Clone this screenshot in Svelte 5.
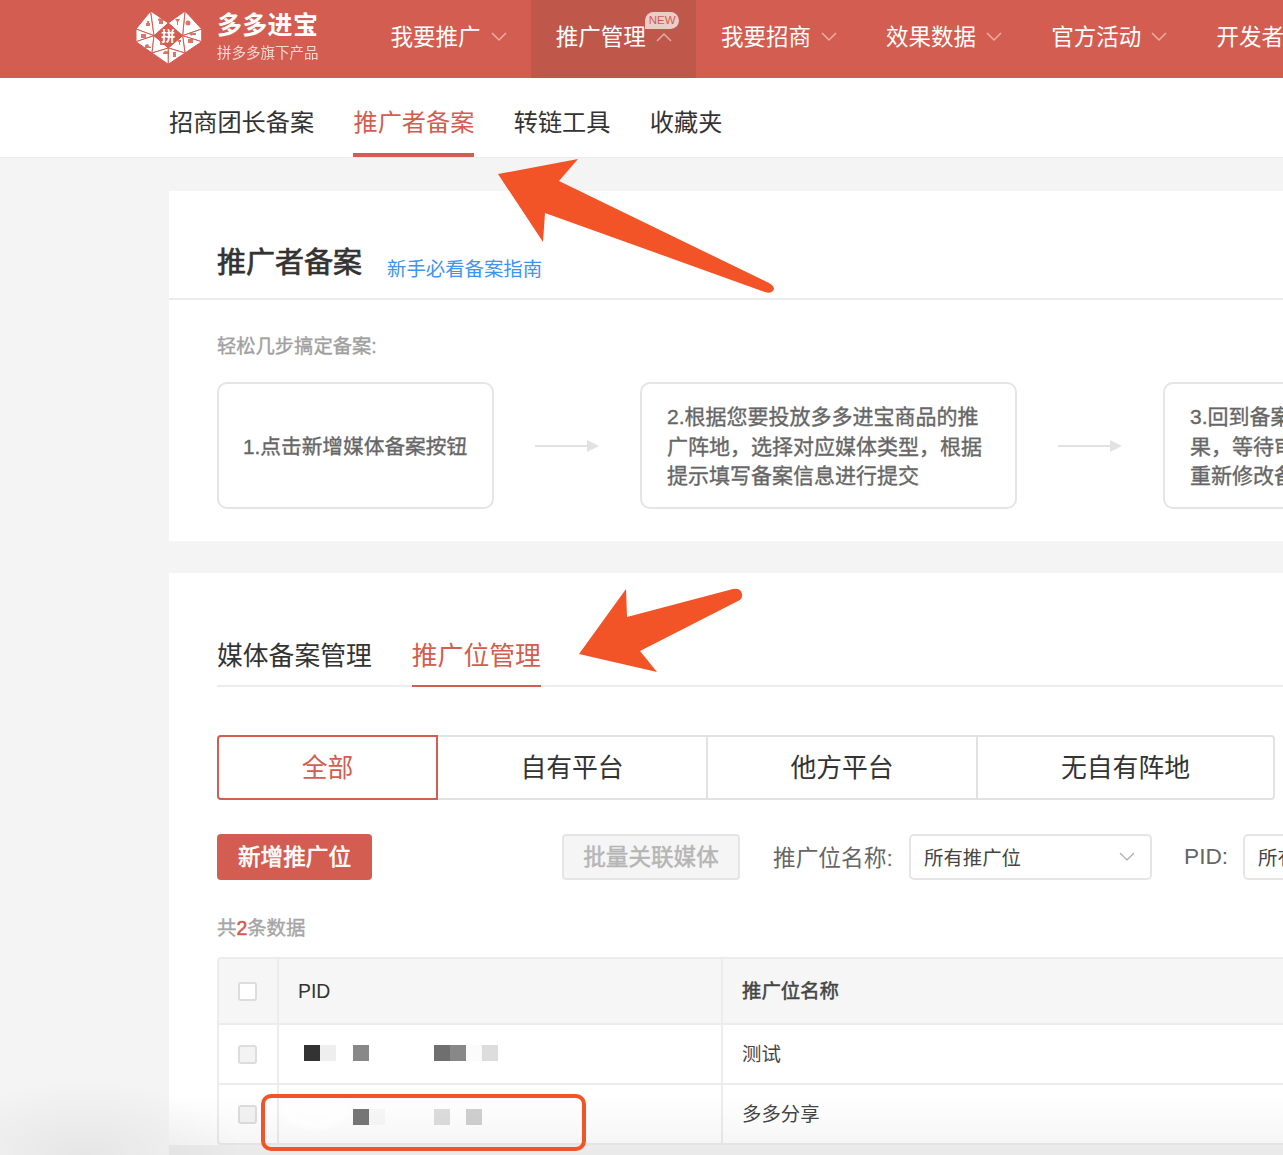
<script>
  const navItems = [
    { label: '我要推广' },
    { label: '推广管理', active: true, badge: 'NEW' },
    { label: '我要招商' },
    { label: '效果数据' },
    { label: '官方活动' },
    { label: '开发者' }
  ];
  const subTabs = ['招商团长备案', '推广者备案', '转链工具', '收藏夹'];
  const segments = [
    { label: '全部', width: 221, active: true },
    { label: '自有平台', width: 270 },
    { label: '他方平台', width: 270 },
    { label: '无自有阵地', width: 297 }
  ];

  // mosaic blocks hiding the PID values
  const rows = [
    {
      name: '测试',
      shift: -2,
      blocks: ['#333', '#eee', '', '#888', '', '', '', '', '#6f6f6f', '#888', '#fbfbfb', '#ddd']
    },
    {
      name: '多多分享',
      shift: 6,
      blocks: ['', '', '', '#777', '#f8f8f8', '', '', '', '#ddd', '', '#d0d0d0', '']
    }
  ];

  // logo pieces
  const A = [0, 19], B = [14.7, 1], N = [32.3, 13], C = [49, 1], D = [65.7, 19];
  const E = [65.7, 31.7], F = [32.3, 54.3], G = [0, 31.7];
  const P = [18, 25.7], Q = [46.6, 25.7], M = [32.3, 38], L = [16, 43], R = [49, 43];
  const pieces = [
    [A, B, P], [B, N, P], [A, P, G], [G, P, L], [P, M, L], [L, M, F],
    [C, D, Q], [N, C, Q], [D, E, Q], [E, Q, R], [Q, M, R], [R, M, F]
  ].map((t) => t.map((p) => p.join(',')).join(' '));
</script>

<div class="page">
  <header class="topbar">
    <div class="brand">
      <svg class="logo" width="66" height="55" viewBox="0 0 66 55">
        {#each pieces as points}
          <polygon {points} fill="#fff" stroke="#d35d50" stroke-width="1" />
        {/each}
        <!-- tiny goods inside the triangles -->
        <g fill="#d35d50" opacity="0.85">
          <path d="M11 11h2v2h1v3h-4v-3h1z" />
          <path d="M22 9l2-1 1 1 2-1 1 2-1 1v3h-4v-3l-1-1z" />
          <path d="M5 24h5v4H5z" />
          <path d="M9 35l3-1 1 2 2 1v1H9z" />
          <rect x="24" y="32" width="4" height="3" />
          <path d="M27 44a3 3 0 0 1 6 0z" />
          <rect x="37" y="42" width="3" height="5" />
          <path d="M42 30h3v2h-1v3h-1v-3h-1z" />
          <rect x="52" y="29" width="5" height="4" />
          <path d="M53 24l3-2v1h4v2h-4v1z" />
          <circle cx="52" cy="13" r="2.500" />
          <path d="M39 9h5l-2 3v3h-1v-3z" />
        </g>
        <polygon points="32.300,13 46.600,25.700 32.300,38 18,25.700" fill="#d35d50" />
        <text class="logo-mark" x="32.300" y="31" text-anchor="middle">拼</text>
      </svg>
      <div class="brand-text">
        <div class="brand-name">多多进宝</div>
        <div class="brand-sub">拼多多旗下产品</div>
      </div>
    </div>
    <nav class="mainnav">
      {#each navItems as item}
        <div class="navitem" class:active={item.active}>
          <span class="navlabel">{item.label}</span>
          <svg class="chev" width="16" height="10" viewBox="0 0 16 10">
            <path d={item.active ? 'M1 9l7-7 7 7' : 'M1 1l7 7 7-7'} fill="none" stroke="#fff" stroke-width="1.500" />
          </svg>
          {#if item.badge}<span class="badge">{item.badge}</span>{/if}
        </div>
      {/each}
    </nav>
  </header>

  <div class="subnav">
    {#each subTabs as tab, i}
      <div class="subtab" class:active={i === 1}>{tab}</div>
    {/each}
  </div>

  <main class="content">
    <section class="card guide">
      <div class="guide-head">
        <h1>推广者备案</h1>
        <span class="guide-link">新手必看备案指南</span>
      </div>
      <div class="guide-body">
        <div class="guide-hint">轻松几步搞定备案:</div>
        <div class="steps">
          <div class="step step-one">1.点击新增媒体备案按钮</div>
          <div class="step-arrow"><span class="line"></span><span class="head"></span></div>
          <div class="step step-two">2.根据您要投放多多进宝商品的推广阵地，选择对应媒体类型，根据提示填写备案信息进行提交</div>
          <div class="step-arrow"><span class="line"></span><span class="head"></span></div>
          <div class="step step-three"><span>3.回到备案列表查看审核结<br />果，等待审核通过，或者<br />重新修改备案信息</span></div>
        </div>
      </div>
    </section>

    <section class="card manage">
      <div class="tabs">
        <div class="tab">媒体备案管理</div>
        <div class="tab active">推广位管理</div>
      </div>

      <div class="segments">
        {#each segments as seg}
          <div class="segment" class:active={seg.active} style="width:{seg.width}px">{seg.label}</div>
        {/each}
      </div>

      <div class="toolbar">
        <button class="btn primary">新增推广位</button>
        <button class="btn disabled">批量关联媒体</button>
        <span class="field-label name-label">推广位名称:</span>
        <div class="select name-select">
          <span>所有推广位</span>
          <svg width="16" height="9" viewBox="0 0 16 9"><path d="M1 1l7 7 7-7" fill="none" stroke="#aaa" stroke-width="1.200" /></svg>
        </div>
        <span class="field-label pid-label">PID:</span>
        <div class="select pid-select"><span>所有PID</span></div>
      </div>

      <div class="count">共<em>2</em>条数据</div>

      <div class="table">
        <div class="tr thead">
          <div class="td check"><span class="box white"></span></div>
          <div class="td pid">PID</div>
          <div class="td name">推广位名称</div>
        </div>
        {#each rows as row}
          <div class="tr">
            <div class="td check"><span class="box"></span></div>
            <div class="td pid">
              <div class="mosaic" style="margin-top:{row.shift}px">
                {#each row.blocks as color}
                  <span style="background:{color || 'transparent'}"></span>
                {/each}
              </div>
            </div>
            <div class="td name">{row.name}</div>
          </div>
        {/each}
      </div>
    </section>
  </main>

  <!-- things drawn on top of the screenshot -->
  <div class="fade"></div>
  <div class="fade-corner"></div>
  <svg class="marks" width="1283" height="1155" viewBox="0 0 1283 1155">
    <defs>
      <filter id="smudge" x="-30%" y="-60%" width="160%" height="220%"><feGaussianBlur stdDeviation="3" /></filter>
    </defs>
    <ellipse cx="315" cy="1110" rx="33" ry="20" fill="#fff" opacity="0.7" filter="url(#smudge)" />
    <path d="M498 174L578 159L559 181L769 283Q776 287 773 291Q770 294 765 292L545 213L543 242Z" fill="#f25327" />
    <path d="M579 654L626 589L627 617L733 589Q741 588 742 594Q743 599 738 601L640 651L657 672Z" fill="#f25327" />
    <rect x="263" y="1096" width="321" height="53" rx="8" fill="none" stroke="#f25327" stroke-width="4" />
  </svg>
</div>

<style>
  :global(body) {
    margin: 0;
    background: #f4f4f4;
  }

  .page {
    position: relative;
    width: 1283px;
    height: 1155px;
    overflow: hidden;
    background: #f4f4f4;
    font-family: "Liberation Sans", "Noto Sans CJK SC", sans-serif;
    color: #333;
  }

  .topbar {
    display: flex;
    height: 78px;
    background: #d35d50;
    padding-left: 136px;
    color: #fff;
  }

  .brand {
    display: flex;
    width: 230px;
    flex: none;
    gap: 15px;
    padding-top: 10px;
    box-sizing: border-box;
  }

  .logo-mark {
    font-size: 14px;
    font-weight: 700;
    fill: #fff;
  }

  .brand-name {
    font-size: 25px;
    font-weight: 700;
    line-height: 30px;
    letter-spacing: 0.3px;
  }

  .brand-sub {
    font-size: 14.500px;
    line-height: 20px;
    margin-top: 3px;
    opacity: 0.75;
  }

  .mainnav {
    display: flex;
    flex: none;
  }

  .navitem {
    position: relative;
    display: flex;
    align-items: center;
    gap: 10px;
    width: 165.200px;
    box-sizing: border-box;
    padding-left: 24.500px;
    padding-bottom: 8px;
    flex: none;
  }

  .navitem.active {
    background: #c0574b;
  }

  .navlabel {
    font-size: 22.500px;
    white-space: nowrap;
  }

  .chev {
    opacity: 0.5;
    margin-top: 4px;
  }

  .badge {
    position: absolute;
    left: 114px;
    top: 12px;
    width: 34px;
    height: 17px;
    border-radius: 9px 9px 9px 0;
    background: #eccdc8;
    color: #d35d50;
    font-size: 11.500px;
    line-height: 17px;
    text-align: center;
  }

  .subnav {
    display: flex;
    height: 80px;
    box-sizing: border-box;
    padding-left: 169px;
    gap: 39.300px;
    background: #fff;
    border-bottom: 1px solid #ececec;
  }

  .subtab {
    font-size: 24.200px;
    height: 79px;
    box-sizing: border-box;
    line-height: 89px;
    white-space: nowrap;
  }

  .subtab.active {
    color: #d35d50;
    border-bottom: 4px solid #d35d50;
  }

  .content {
    padding: 33px 0 0 169px;
    display: flex;
    flex-direction: column;
    gap: 32px;
  }

  .card {
    background: #fff;
    width: 1300px;
  }

  .guide-head {
    display: flex;
    align-items: flex-end;
    gap: 25px;
    height: 109px;
    box-sizing: border-box;
    padding: 0 0 15px 48px;
    border-bottom: 2px solid #ececec;
  }

  h1 {
    margin: 0;
    font-size: 29px;
    font-weight: 400;
    -webkit-text-stroke: 0.7px #333;
    line-height: 40px;
    color: #333;
  }

  .guide-link {
    font-size: 19.400px;
    line-height: 28px;
    color: #3d95f0;
  }

  .guide-body {
    padding: 34px 0 32px 48px;
  }

  .guide-hint {
    font-size: 19.300px;
    -webkit-text-stroke: 0.4px #a0a0a0;
    line-height: 26px;
    color: #a0a0a0;
  }

  .steps {
    display: flex;
    align-items: center;
    margin-top: 22px;
  }

  .step {
    height: 127px;
    box-sizing: border-box;
    flex: none;
    display: flex;
    align-items: center;
    border: 2px solid #e5e5e5;
    border-radius: 10px;
    font-size: 21px;
    line-height: 29.500px;
    color: #666;
    -webkit-text-stroke: 0.35px #666;
    padding-top: 2px;
  }

  .step-one {
    width: 277px;
    font-size: 20.700px;
    padding-left: 24px;
    padding-right: 0;
    white-space: nowrap;
  }

  .step-two {
    width: 377px;
    padding-left: 25px;
    padding-right: 25px;
  }

  .step-three {
    width: 378px;
    padding-left: 25px;
    padding-right: 25px;
    white-space: nowrap;
  }

  .step-arrow {
    width: 146px;
    flex: none;
    display: flex;
    align-items: center;
    justify-content: center;
  }

  .step-arrow .line {
    width: 52px;
    height: 2px;
    background: #e2e2e2;
  }

  .step-arrow .head {
    border-left: 12px solid #e2e2e2;
    border-top: 6px solid transparent;
    border-bottom: 6px solid transparent;
  }

  .manage {
    padding: 49px 0 0 48px;
    box-sizing: border-box;
  }

  .tabs {
    display: flex;
    gap: 40px;
    width: 1300px;
    height: 65px;
    box-sizing: border-box;
    border-bottom: 2px solid #ececec;
  }

  .tab {
    font-size: 25.800px;
    line-height: 68px;
    height: 65px;
    box-sizing: border-box;
    white-space: nowrap;
  }

  .tab.active {
    color: #d35d50;
    border-bottom: 2px solid #d35d50;
  }

  .segments {
    display: flex;
    margin-top: 48px;
  }

  .segment {
    height: 65px;
    box-sizing: border-box;
    border: 2px solid #e2e2e2;
    border-left: none;
    font-size: 25.800px;
    line-height: 62px;
    text-align: center;
    flex: none;
  }

  .segment:last-child {
    border-radius: 0 4px 4px 0;
  }

  .segment.active {
    border: 2px solid #d35d50;
    border-radius: 4px 0 0 4px;
    color: #d35d50;
  }

  .toolbar {
    display: flex;
    align-items: center;
    height: 46px;
    margin-top: 34px;
  }

  .btn {
    height: 46px;
    flex: none;
    box-sizing: border-box;
    border-radius: 4px;
    font-family: inherit;
    font-size: 22.600px;
    padding: 0 0 3px;
    white-space: nowrap;
  }

  .primary {
    width: 155px;
    background: #d35d50;
    border: none;
    color: #fff;
    -webkit-text-stroke: 0.6px #fff;
  }

  .disabled {
    width: 178px;
    margin-left: 190px;
    background: #f5f5f5;
    border: 2px solid #e5e5e5;
    color: #b5b5b5;
    -webkit-text-stroke: 0.5px #b5b5b5;
  }

  .field-label {
    font-size: 22.700px;
    color: #666;
    white-space: nowrap;
    margin-bottom: 2px;
  }

  .name-label {
    width: 136px;
    margin-left: 33px;
    flex: none;
  }

  .pid-label {
    width: 59px;
    margin-left: 32px;
    flex: none;
  }

  .select {
    height: 46px;
    box-sizing: border-box;
    flex: none;
    display: flex;
    align-items: center;
    justify-content: space-between;
    padding: 0 15px 2px 13px;
    border: 2px solid #e5e5e5;
    border-radius: 5px;
    font-size: 19.400px;
    color: #444;
  }

  .name-select {
    width: 243px;
  }

  .pid-select {
    width: 243px;
  }

  .count {
    margin-top: 34px;
    font-size: 19.400px;
    -webkit-text-stroke: 0.4px #a5a5a5;
    line-height: 28px;
    color: #a5a5a5;
  }

  .count em {
    font-style: normal;
    color: #d35d50;
    -webkit-text-stroke: 0.6px #d35d50;
  }

  .table {
    margin-top: 15px;
    width: 1300px;
    border: 2px solid #ececec;
    border-radius: 4px;
    box-sizing: border-box;
  }

  .tr {
    display: grid;
    grid-template-columns: 58px 444px 1fr;
    height: 60px;
    border-top: 2px solid #ececec;
    box-sizing: border-box;
  }

  .tr.thead {
    height: 64px;
    border-top: none;
    background: #f6f6f6;
  }

  .td {
    display: flex;
    align-items: center;
    padding-left: 19px;
    font-size: 19.400px;
    border-left: 2px solid #ececec;
  }

  .td.check {
    border-left: none;
    padding-left: 0;
    padding-right: 2px;
    justify-content: center;
  }

  .thead .name {
    -webkit-text-stroke: 0.5px #444;
    padding-bottom: 0;
  }

  .td.name {
    color: #444;
    padding-bottom: 4px;
  }

  .box {
    width: 19px;
    height: 19px;
    box-sizing: border-box;
    border: 2px solid #ddd;
    border-radius: 3px;
    background: #f3f3f3;
  }

  .box.white {
    background: #fff;
  }

  .mosaic {
    display: flex;
    padding-left: 6px;
  }

  .mosaic span {
    width: 16.200px;
    height: 16px;
    flex: none;
  }

  .fade {
    position: absolute;
    left: 169px;
    right: 0;
    bottom: 0;
    height: 60px;
    background: linear-gradient(to bottom, rgba(0, 0, 0, 0), rgba(0, 0, 0, 0.045));
    pointer-events: none;
  }

  .fade-corner {
    position: absolute;
    left: -75px;
    bottom: -75px;
    width: 320px;
    height: 150px;
    background: radial-gradient(ellipse at center, rgba(0, 0, 0, 0.06), rgba(0, 0, 0, 0) 70%);
    pointer-events: none;
  }

  .marks {
    position: absolute;
    left: 0;
    top: 0;
    pointer-events: none;
  }
</style>
